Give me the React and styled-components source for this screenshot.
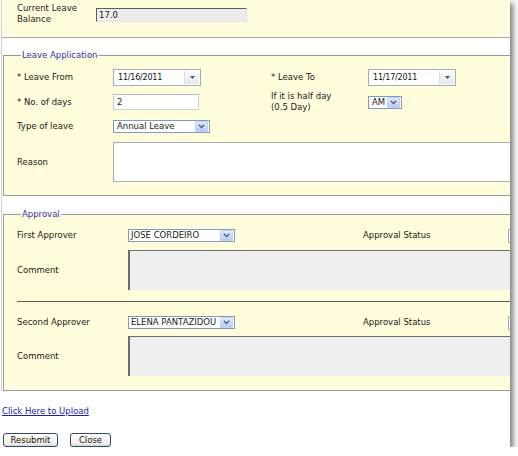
import styled, { createGlobalStyle } from 'styled-components';

const GlobalStyle = createGlobalStyle`
  html, body {
    margin: 0;
    padding: 0;
    background: #fff;
  }
  body {
    font-family: "DejaVu Sans", Verdana, sans-serif;
    font-size: 8.5px;
    color: #1a1a1a;
  }
`;

const Viewport = styled.div`
  width: 510px;
  height: 447px;
  overflow: hidden;
  background: #fff;
  box-shadow: 3px 3px 6px rgba(0, 0, 0, 0.55);
`;

const Sheet = styled.div`
  width: 600px;
  padding-left: 1px;
`;

const Frame = styled.div`
  border-left: 1px solid #cfcfcf;
`;

const BalancePanel = styled.div`
  height: 38px;
  box-sizing: border-box;
  background: #fffddb;
  border-bottom: 1px solid #a7a7a7;
  display: grid;
  grid-template-columns: 79px 151px;
  align-items: start;
  padding: 3px 0 0 15px;
`;

const Label = styled.div`
  line-height: 11px;
  white-space: nowrap;
  margin-top: ${(p) => p.$shift || 0}px;
`;

const ReadOnlyBox = styled.div`
  height: 14px;
  margin-top: 5px;
  box-sizing: border-box;
  background: #ececec;
  border: 1px solid;
  border-color: #5c5c5c #e4e4e4 #e4e4e4 #5c5c5c;
  padding-left: 2px;
  line-height: 12px;
`;

const Group = styled.fieldset`
  margin: ${(p) => p.$top}px 0 0 1px;
  padding: ${(p) => p.$pt}px 0 ${(p) => p.$pb}px 13px;
  border: 1px solid #9a9a9a;
  background: #fffddb;
  min-width: 0;
`;

const Legend = styled.legend`
  margin-left: 4px;
  padding: 0 1px;
  color: #3232b4;
  line-height: 11px;
`;

const FormRow = styled.div`
  display: grid;
  grid-template-columns: ${(p) => p.$cols};
  height: ${(p) => p.$h}px;
  margin-top: ${(p) => p.$mt || 0}px;
  align-items: center;
`;

const DateBox = styled.div`
  width: 88px;
  height: 17px;
  box-sizing: border-box;
  border: 1px solid #a5acb2;
  background: #fff;
  display: flex;
  align-items: center;
`;

const DateText = styled.span`
  flex: 1;
  padding-left: 4px;
  font-size: 8px;
  letter-spacing: -0.2px;
  color: #111;
`;

const DateButton = styled.span`
  width: 14px;
  height: 13px;
  margin-right: 1px;
  border-left: 1px solid #d9dee6;
  background: linear-gradient(#fafbfc, #e4e8ee);
  display: flex;
  align-items: center;
  justify-content: center;
`;

const TextBox = styled.div`
  width: 86px;
  height: 16px;
  box-sizing: border-box;
  background: #fff;
  border: 1px solid #cfcfcf;
  border-top-color: #b9b9b9;
  padding-left: 3px;
  line-height: 14px;
`;

const SelectBox = styled.div`
  width: ${(p) => p.$w}px;
  height: 13px;
  box-sizing: border-box;
  border: 1px solid #7f9db9;
  background: #fff;
  display: flex;
  align-items: center;
`;

const SelectText = styled.span`
  flex: 1;
  padding-left: ${(p) => p.$pl || 3}px;
  line-height: 11px;
  white-space: nowrap;
  overflow: hidden;
`;

const SelectArrow = styled.span`
  width: 11px;
  height: 9px;
  margin-right: 1px;
  border-radius: 1px;
  background: linear-gradient(#e4ecfd, #b8cbf6);
  border: 1px solid #c3d3f5;
  display: flex;
  align-items: center;
  justify-content: center;
`;

const Area = styled.div`
  width: ${(p) => p.$w}px;
  height: 40px;
  box-sizing: border-box;
  background: ${(p) => (p.$readOnly ? '#efefef' : '#fff')};
  border: 1px solid;
  border-color: ${(p) =>
    p.$readOnly ? '#6e6e6e #ededed #efefef #6e6e6e' : '#a5acb2'};
  border-width: ${(p) => (p.$readOnly ? '1px 1px 0 2px' : '1px')};
`;

const StatusBox = styled.div`
  width: 60px;
  height: 14px;
  box-sizing: border-box;
  border: 1px solid #a5acb2;
  background: #fbfbfb;
`;

const Divider = styled.div`
  margin: 11px 0 10px;
  border-top: 1px solid #5e5e5e;
`;

const UploadLink = styled.a`
  display: block;
  margin: 15px 0 0 1px;
  line-height: 11px;
  color: #2020b0;
  text-decoration: underline;
  cursor: pointer;
`;

const ButtonBar = styled.div`
  display: flex;
  gap: 12px;
  margin: 16px 0 0 2px;
`;

const Button = styled.button`
  width: ${(p) => p.$w}px;
  height: 14px;
  padding: 0;
  border: 1px solid #2f4d72;
  border-radius: 3px;
  background: linear-gradient(#ffffff, #f1f0ea 80%, #d9d4c8);
  font-family: "DejaVu Sans", Verdana, sans-serif;
  font-size: 8.5px;
  line-height: 12px;
  color: #111;
`;

const Chevron = () => (
  <svg width="7" height="5" viewBox="0 0 7 5">
    <polyline points="0.8,0.8 3.5,3.6 6.2,0.8" fill="none" stroke="#4a5f8c" strokeWidth="1.4" />
  </svg>
);

const Caret = () => (
  <svg width="5" height="3" viewBox="0 0 5 3">
    <polygon points="0,0 5,0 2.5,3" fill="#4c5566" />
  </svg>
);

const DatePicker = ({ value }) => (
  <DateBox>
    <DateText>{value}</DateText>
    <DateButton>
      <Caret />
    </DateButton>
  </DateBox>
);

const Select = ({ value, width, pl }) => (
  <SelectBox $w={width}>
    <SelectText $pl={pl}>{value}</SelectText>
    <SelectArrow>
      <Chevron />
    </SelectArrow>
  </SelectBox>
);

const approvalCols = '111px 235px 145px auto';

const ApproverBlock = ({ title, name, commentTop }) => (
  <>
    <FormRow $cols={approvalCols} $h={21}>
      <Label>{title}</Label>
      <Select value={name} width={107} pl={2} />
      <Label>Approval Status</Label>
      <StatusBox />
    </FormRow>
    <FormRow $cols="111px auto" $h={40} $mt={commentTop}>
      <Label>Comment</Label>
      <Area $readOnly $w={420} />
    </FormRow>
  </>
);

const leaveCols = '96px 158px 97px auto';

export default function App() {
  return (
    <>
      <GlobalStyle />
      <Viewport>
        <Sheet>
          <Frame>
            <BalancePanel>
              <Label>
                Current Leave
                <br />
                Balance
              </Label>
              <ReadOnlyBox>17.0</ReadOnlyBox>
            </BalancePanel>

            <Group $top={12} $pt={6} $pb={13}>
              <Legend>Leave Application</Legend>
              <FormRow $cols={leaveCols} $h={21}>
                <Label>* Leave From</Label>
                <DatePicker value="11/16/2011" />
                <Label>* Leave To</Label>
                <DatePicker value="11/17/2011" />
              </FormRow>
              <FormRow $cols={leaveCols} $h={28}>
                <Label>* No. of days</Label>
                <TextBox>2</TextBox>
                <Label>
                  If it is half day
                  <br />
                  (0.5 Day)
                </Label>
                <Select value="AM" width={34} />
              </FormRow>
              <FormRow $cols={leaveCols} $h={21}>
                <Label>Type of leave</Label>
                <Select value="Annual Leave" width={97} />
              </FormRow>
              <FormRow $cols="96px auto" $h={40} $mt={5}>
                <Label>Reason</Label>
                <Area $w={440} />
              </FormRow>
            </Group>

            <Group $top={13} $pt={5} $pb={14}>
              <Legend>Approval</Legend>
              <ApproverBlock title="First Approver" name="JOSE CORDEIRO" commentTop={4} />
              <Divider />
              <ApproverBlock title="Second Approver" name="ELENA PANTAZIDOU" commentTop={3} />
            </Group>
          </Frame>

          <UploadLink>Click Here to Upload</UploadLink>
          <ButtonBar>
            <Button $w={55}>Resubmit</Button>
            <Button $w={41}>Close</Button>
          </ButtonBar>
        </Sheet>
      </Viewport>
    </>
  );
}
